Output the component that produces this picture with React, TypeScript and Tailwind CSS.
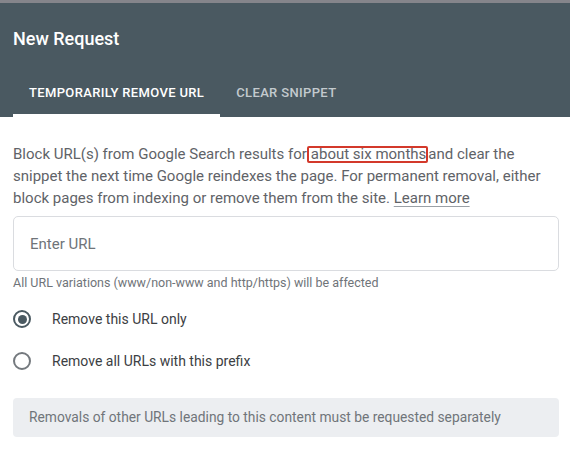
import { useState } from 'react';

const content = {
  title: 'New Request',
  tabs: ['Temporarily remove URL', 'Clear snippet'],
  helper: 'All URL variations (www/non-www and http/https) will be affected',
  options: ['Remove this URL only', 'Remove all URLs with this prefix'],
  note: 'Removals of other URLs leading to this content must be requested separately',
};

const Radio = ({ checked }: { checked: boolean }) => (
  <span
    className={`w-[18px] h-[18px] rounded-full border-2 flex items-center justify-center ${
      checked ? 'border-[#4a5961]' : 'border-[#74797e]'
    }`}
  >
    {checked && <span className="w-[9px] h-[9px] rounded-full bg-[#4a5961]" />}
  </span>
);

const App = () => {
  const [tab, setTab] = useState(0);
  const [choice, setChoice] = useState(0);

  return (
    <div className="w-[570px] h-[455px] bg-white overflow-hidden font-['Roboto','Liberation_Sans',sans-serif]">
      <div className="h-[3px] bg-[#85858b]" />

      {/* Header */}
      <header className="bg-[#4a5961] h-[114px] flex flex-col">
        <h1 className="pl-[13px] pt-[24px] text-[18px] leading-[24px] font-medium text-white">{content.title}</h1>
        <div className="mt-auto flex pl-[13px]">
          {content.tabs.map((t, i) => (
            <button
              key={t}
              onClick={() => setTab(i)}
              className={`h-[48px] pt-[3px] px-[16px] border-b-[3px] flex items-center uppercase text-[13px] font-medium tracking-[0.35px] ${
                tab === i ? 'border-white text-white' : 'border-transparent text-[#c3cace]'
              }`}
            >
              {t}
            </button>
          ))}
        </div>
      </header>

      {/* Body */}
      <section className="pl-[13px] pr-[11px] pt-[26px]">
        <p className="text-[15px] leading-[22px] text-[#5f6368]">
          Block URL(s) from Google Search results for
          <span className="inline-block leading-[13px] border-2 border-[#d3392b] rounded-[2px] pl-[2px]">about six months </span>
          and clear the snippet the next time Google reindexes the page. For permanent removal, either block pages from
          indexing or remove them from the site.{' '}
          <a href="#" className="underline underline-offset-[3px] decoration-[#9aa0a6]">Learn more</a>
        </p>

        <input
          placeholder="Enter URL"
          className="mt-[7px] w-full h-[55px] border border-[#dadce0] rounded-[5px] pl-[16px] text-[15px] text-[#3c4043] placeholder:text-[#6f7479] outline-none"
        />
        <p className="mt-[4px] text-[12.5px] leading-[16px] text-[#6f7479]">{content.helper}</p>

        <div className="mt-[7px] flex flex-col">
          {content.options.map((o, i) => (
            <label key={o} onClick={() => setChoice(i)} className="h-[42px] flex items-center gap-[21px] cursor-pointer">
              <Radio checked={choice === i} />
              <span className="text-[14px] text-[#3c4043]">{o}</span>
            </label>
          ))}
        </div>

        <div className="mt-[16px] h-[39px] bg-[#eceef1] rounded-[4px] pl-[16px] flex items-center text-[13.8px] text-[#70757a]">
          {content.note}
        </div>
      </section>
    </div>
  );
};

export default App;
